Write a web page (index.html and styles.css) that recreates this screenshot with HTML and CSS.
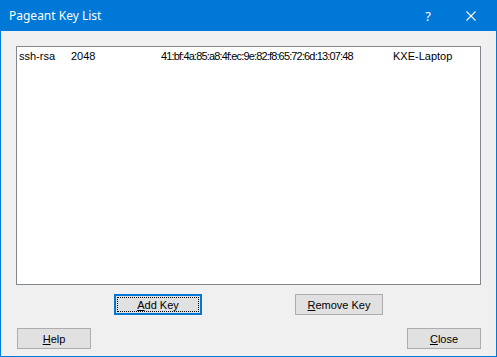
FILE: index.html
```html
<!DOCTYPE html>
<html>
<head>
    <title>Pageant Key List</title>
    <link rel="stylesheet" href="styles.css">
</head>
<body>
    <div class="window">
        <div class="titlebar">
            <span class="title">Pageant Key List</span>
            <span class="caption-btn help-btn">?</span>
            <span class="caption-btn close-btn">
                <svg width="10" height="10" viewBox="0 0 10 10">
                    <path d="M0.5 0.5 L9.5 9.5 M9.5 0.5 L0.5 9.5" stroke="#fff" stroke-width="1.1" fill="none"/>
                </svg>
            </span>
        </div>

        <div class="content">
            <div class="keylist">
                <div class="key-row">
                    <span>ssh-rsa</span>
                    <span>2048</span>
                    <span class="fingerprint">41:bf:4a:85:a8:4f:ec:9e:82:f8:65:72:6d:13:07:48</span>
                    <span>KXE-Laptop</span>
                </div>
            </div>

            <div class="list-buttons">
                <button class="btn btn-wide focused"><span class="focus-ring"><u>A</u>dd Key</span></button>
                <button class="btn btn-wide"><u>R</u>emove Key</button>
            </div>

            <div class="dialog-buttons">
                <button class="btn"><u>H</u>elp</button>
                <button class="btn"><u>C</u>lose</button>
            </div>
        </div>
    </div>
</body>
</html>
```

FILE: styles.css
```css
body {
    margin: 0;
    font-family: "Liberation Sans", Arial, sans-serif;
    font-size: 11px;
    color: #000;
}
.window {
    width: 497px;
    height: 357px;
    box-sizing: border-box;
    border: 1px solid #0078d7;
    border-top: none;
    background: #f0f0f0;
    display: flex;
    flex-direction: column;
}
.titlebar {
    height: 31px;
    background: #0078d7;
    color: white;
    display: flex;
    align-items: center;
    margin: 0 -1px;
}
.title {
    font-family: "Noto Sans", "Open Sans", sans-serif;
    font-size: 12px;
    padding-left: 9px;
    flex: 1;
}
.caption-btn {
    height: 31px;
    display: flex;
    align-items: center;
    font-family: "Noto Sans", sans-serif;
    font-size: 13px;
}
.help-btn {
    width: 20px;
    justify-content: center;
}
.close-btn {
    width: 59px;
    box-sizing: border-box;
    padding-left: 28px;
}
.content {
    padding: 15px 15px 0 15px;
    display: flex;
    flex-direction: column;
}
.keylist {
    height: 239px;
    box-sizing: border-box;
    background: white;
    border: 1px solid #828790;
    padding: 2px 0 0 2px;
}
.key-row {
    display: grid;
    grid-template-columns: 52px 90px 232px auto;
    line-height: 14px;
}
.fingerprint {
    letter-spacing: -0.85px;
}
.list-buttons {
    display: flex;
    justify-content: center;
    gap: 93px;
    margin-top: 9px;
}
.dialog-buttons {
    display: flex;
    justify-content: space-between;
    margin-top: 13px;
    padding-left: 1px;
}
.btn {
    width: 74px;
    height: 21px;
    box-sizing: border-box;
    background: #e1e1e1;
    border: 1px solid #adadad;
    font-family: "Liberation Sans", Arial, sans-serif;
    font-size: 11px;
    color: #000;
    padding: 0;
    display: flex;
    align-items: center;
    justify-content: center;
}
.btn-wide {
    width: 88px;
}
.focused {
    border: 1px solid #0078d7;
    box-shadow: inset 0 0 0 1px #0078d7;
    padding: 2px;
}
.focus-ring {
    flex: 1;
    align-self: stretch;
    display: flex;
    align-items: center;
    justify-content: center;
    border: 1px dotted #000;
}
```
